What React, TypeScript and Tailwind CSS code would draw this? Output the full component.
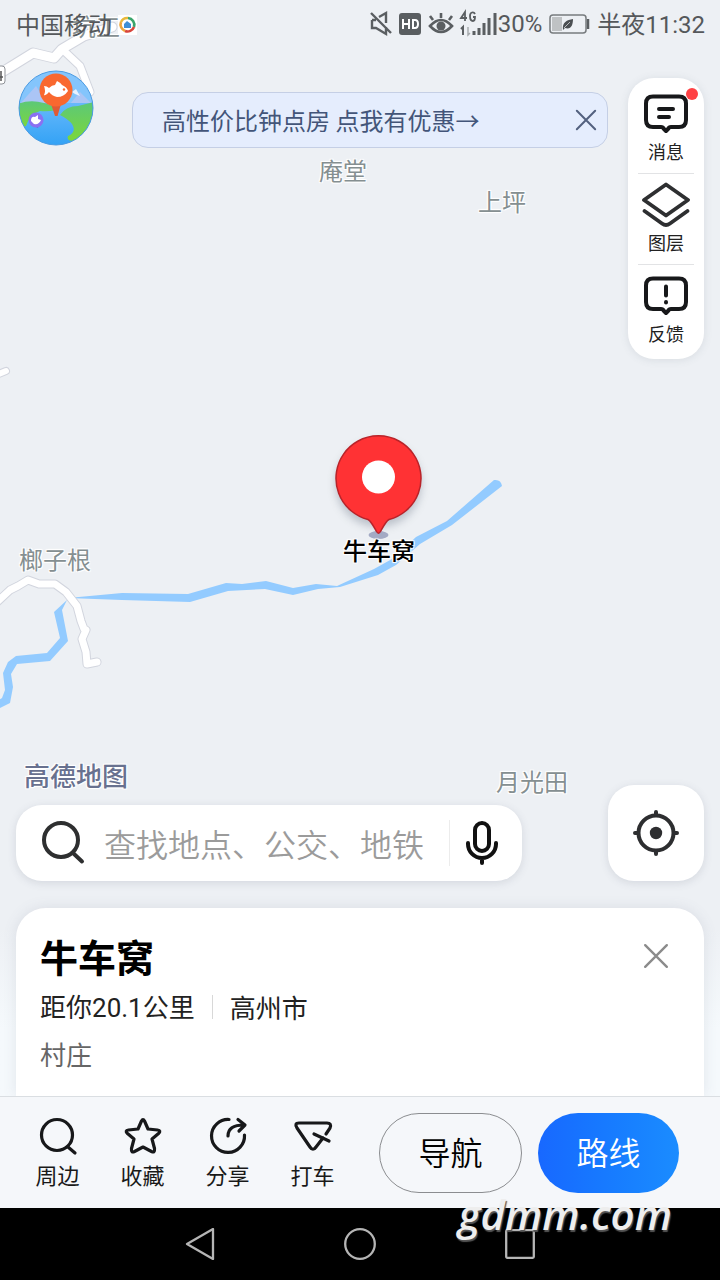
import React from "react";

const outline =
  "[text-shadow:0_0_2px_#fff,1px_1px_1px_#fff,-1px_-1px_1px_#fff,1px_-1px_1px_#fff,-1px_1px_1px_#fff]";

function MapLabel({ text, place }: { text: string; place: string }) {
  return (
    <span className={`absolute whitespace-nowrap text-[24px] leading-8 text-[#858f91] ${outline} ${place}`}>
      {text}
    </span>
  );
}

function MapCanvas() {
  const roads = [
    "M-6 77L12 66L33 53L54 58L62 49L84 36L112 27",
    "M62 49L80 66L90 92",
    "M-4 603L10 590L18 586L28 580L39 584L55 584L66 592L77 606L81 621L84 629L86 630L82 639L86 652L87 664L97 662",
  ];
  return (
    <div className="absolute inset-0 overflow-hidden bg-[#edf0f4]">
      <svg width="720" height="1280" viewBox="0 0 720 1280" aria-hidden="true" fill="none">
        <g fill="#93cbff">
          <path d="M68 598L122 593L188 594L226 583L242 584L266 581L293 588L316 584L337 586L374 569L392 559L416 537L447 521L494 480Q501 479 502 486L452 525L420 544L396 565L378 575L340 587L318 589L293 595L265 589L228 591L190 602L122 600Z" />
          <path d="M67 600L54 612L60 638L47 653L16 656L8 662L3 673L5 690L2 698L-4 702V710L10 703L13 687L11 674L17 664L50 661L68 641L62 610Z" />
        </g>
        <g strokeLinejoin="round" strokeLinecap="round">
          {roads.map((d, i) => (
            <path key={d} d={d} stroke="#d2d5de" strokeWidth={i === 0 ? 11 : 9} />
          ))}
          {roads.map((d, i) => (
            <path key={d} d={d} stroke="#fff" strokeWidth={i === 0 ? 9 : 7} />
          ))}
          <path d="M-4 375L6 371" stroke="#d2d5de" strokeWidth="8" />
          <path d="M-4 375L6 371" stroke="#fff" strokeWidth="6" />
        </g>
        <rect x="-12" y="66" width="17" height="18" rx="3" fill="#fff" stroke="#8f9297" />
        <path d="M-2 77H3M1 71V81" stroke="#555" strokeWidth="1.5" />
        <rect x="118" y="15" width="19" height="20" fill="#fff" />
        <g strokeWidth="2.6">
          <path d="M121 22A7 7 0 0 1 128 18" stroke="#e9b93a" />
          <path d="M128 18A7 7 0 0 1 134 27" stroke="#3aa56b" />
          <path d="M134 27A7 7 0 0 1 125 31" stroke="#d8453b" />
          <path d="M125 31A7 7 0 0 1 121 22" stroke="#eea63c" />
        </g>
        <path d="M124 28V24L127 21L131 24V28Z" fill="#3f8fd6" />
      </svg>
      <MapLabel text="坑工" place="left-[72px] top-[10px]" />
      <MapLabel text="庵堂" place="left-[319px] top-[154px]" />
      <MapLabel text="上坪" place="left-[478px] top-[185px]" />
      <MapLabel text="榔子根" place="left-[19px] top-[543px]" />
      <MapLabel text="月光田" place="left-[496px] top-[765px]" />
      <svg className="absolute left-[326px] top-[428px]" width="106" height="118" viewBox="0 0 106 118" aria-hidden="true">
        <defs>
          <filter id="pinShadow" x="-20%" y="-20%" width="140%" height="140%">
            <feGaussianBlur stdDeviation="4" />
          </filter>
        </defs>
        <circle cx="52.500" cy="56" r="43" fill="#7d8694" opacity=".45" filter="url(#pinShadow)" />
        <ellipse cx="52.500" cy="107" rx="10" ry="4" fill="#a3aac4" />
        <path
          d="M42 91.500A42.500 42.500 0 1 1 63 91.500C60 93 57 99 54.500 103.500Q52.500 107 50.500 103.500C48 99 45 93 42 91.500Z"
          fill="#ff3234"
          stroke="#b92329"
          strokeWidth="1.500"
        />
        <circle cx="52.500" cy="49" r="16.500" fill="#fff" />
      </svg>
      <span className={`absolute left-[343px] top-[534px] whitespace-nowrap text-[24px] font-medium leading-8 text-black ${outline}`}>
        牛车窝
      </span>
    </div>
  );
}

function StatusBar() {
  return (
    <header className="flex h-12 items-center justify-between pl-4 pr-4 text-[24px] leading-8 text-[#55585b]">
      <span>中国移动</span>
      <div className="flex items-center">
        <svg width="129" height="30" viewBox="0 0 129 30" fill="none" stroke="#5a5e61" aria-hidden="true">
          <path d="M2 4L22 24M3 11V19H7L17 25V18M3 11H7M10 8L17 4V14" strokeWidth="2.400" />
          <rect x="30" y="4" width="22" height="22" rx="3" fill="#5a5e61" stroke="none" />
          <path d="M34 10V20M40 10V20M34 15H40M44 11V19H46Q49 19 49 15T46 11Z" stroke="#fff" strokeWidth="2" />
          <path d="M61 17Q72 5 83 17Q72 29 61 17ZM72 9V4M64 11L61 7M80 11L83 7" strokeWidth="2.600" />
          <circle cx="72" cy="17" r="4.500" fill="#5a5e61" stroke="none" />
          <path d="M96 12V3L92 9H98M106 5Q105 3 103 3.500Q101 4 101 7Q101 12 104 12Q106 12 106 8H104" strokeWidth="1.800" />
          <path d="M92 20L94 18V26" strokeWidth="2" />
          <path d="M99 18V26L101 24" strokeWidth="1.400" stroke="#a4a8ab" />
          <path d="M105 22V26M110 19V26M115 14V26M120 9V26M126 4V26" strokeWidth="3" />
        </svg>
        <span className="font-[Roboto]">30%</span>
        <svg className="ml-[7px] mr-1.5" width="42" height="22" viewBox="0 0 42 22" aria-hidden="true">
          <rect x="1" y="2" width="36" height="18" rx="3" fill="none" stroke="#777b7e" strokeWidth="1.500" />
          <rect x="3" y="4" width="10" height="14" fill="#bfc2c4" />
          <path d="M39 6V16" stroke="#5a5e61" strokeWidth="2.500" />
          <path d="M14 17C13 9 18 7 24 6C24 12 22 17 16 15Z" fill="#4b4f52" />
          <path d="M15 15L21 9" stroke="#d5d8da" strokeWidth=".8" />
        </svg>
        <span className="-mr-px whitespace-nowrap">
          半夜<span className="font-[Roboto]">11:32</span>
        </span>
      </div>
    </header>
  );
}

function Avatar() {
  return (
    <button aria-label="我的" className="size-[76px] shrink-0">
      <svg width="76" height="76" viewBox="0 0 76 76" aria-hidden="true">
        <defs>
          <clipPath id="globe">
            <circle cx="38" cy="38" r="37" />
          </clipPath>
          <linearGradient id="sea" x1="0" y1="0" x2="0" y2="1">
            <stop offset="0" stopColor="#67b8fb" />
            <stop offset="1" stopColor="#32a2f5" />
          </linearGradient>
          <linearGradient id="land" x1="0" y1="0" x2="0" y2="1">
            <stop offset="0" stopColor="#5cc878" />
            <stop offset="1" stopColor="#7cd73a" />
          </linearGradient>
        </defs>
        <g clipPath="url(#globe)">
          <rect width="76" height="76" fill="#84c5fc" />
          <path d="M0 36L18 16L28 32L52 34L62 22L76 36Z" fill="#abc5f5" />
          <path d="M54 22L58 19L62 26L57 24Z" fill="#e8f1ff" />
          <rect y="33" width="76" height="43" fill="url(#sea)" />
          <path d="M0 34Q12 29 26 33Q35 35 38 40Q30 42 22 41Q12 44 8 56L0 58Z" fill="url(#land)" />
          <path d="M42 45Q48 36 60 36L76 32V62Q66 72 56 71Q48 71 50 66Q59 62 54 54Q50 49 42 45Z" fill="url(#land)" />
        </g>
        <circle cx="38" cy="38" r="37" fill="none" stroke="#4b9be2" />
        <path d="M33 34H43L39.500 46H37Z" fill="#df5a36" />
        <circle cx="38" cy="20" r="16.500" fill="#f9682f" />
        <path d="M26 16Q29 16 31 18Q34 15 37 15L39 11Q43 13 44 15Q49 17 50 21Q46 27 39 27Q34 26 31 22Q28 26 26 25Q28 21 26 16Z" fill="#fff" />
        <circle cx="46" cy="19.500" r="1.200" fill="#f9682f" />
        <path d="M14 55L20 58L21 54Z" fill="#6f5adb" />
        <circle cx="18" cy="50" r="7.500" fill="#8a70f1" />
        <path d="M13 51Q13 46 17 47L20 45V49L23 50Q21 55 16 54Z" fill="#fff" />
      </svg>
    </button>
  );
}

function Cross({ size, color }: { size: number; color: string }) {
  return (
    <svg width={size} height={size} viewBox="0 0 24 24" fill="none" stroke={color} strokeWidth="2.200" strokeLinecap="round" aria-hidden="true">
      <path d="M2 2L22 22M22 2L2 22" />
    </svg>
  );
}

function Bubble({ children }: { children: React.ReactNode }) {
  return (
    <svg width="48" height="48" viewBox="0 0 48 48" fill="none" stroke="#17181a" strokeWidth="4" strokeLinecap="round" strokeLinejoin="round" aria-hidden="true">
      <path d="M11 6.500H37Q44 6.500 44 13.500V30Q44 37 37 37H29Q27 37 26 39L24 41L22 39Q21 37 19 37H11Q4 37 4 30V13.500Q4 6.500 11 6.500Z" />
      {children}
    </svg>
  );
}

function ToolStack() {
  const item = "relative flex w-14 flex-col items-center text-[18px] leading-6 text-[#222]";
  return (
    <nav className="mt-2 flex w-[76px] shrink-0 flex-col items-center rounded-[26px] bg-white pb-3.5 pt-3 shadow-[0_1px_8px_rgba(80,90,110,0.13)]">
      <button className={`${item} pb-2.5`}>
        <Bubble>
          <path d="M17 19H31M17 27H27" />
        </Bubble>
        <span className="mt-px">消息</span>
        <i className="absolute right-[-4px] top-[-2px] size-3 rounded-full bg-[#ff4144]" />
      </button>
      <button className={`${item} border-t border-[#e2e3e5] pb-2.5 pt-[7px]`}>
        <svg width="48" height="48" viewBox="0 0 48 48" fill="none" stroke="#2e2f31" strokeWidth="3.800" strokeLinecap="round" strokeLinejoin="round" aria-hidden="true">
          <path d="M24 3.500L46 19L24 34.500L2 19Z" />
          <path d="M2.500 30L20 42.500Q24 45.500 28 42.500L45.500 30" />
        </svg>
        <span className="mt-px">图层</span>
      </button>
      <button className={`${item} border-t border-[#e2e3e5] pt-[7px]`}>
        <Bubble>
          <path d="M24 14.500V23.500M24 30V30.500" />
        </Bubble>
        <span className="mt-px">反馈</span>
      </button>
    </nav>
  );
}

function SearchRow() {
  return (
    <div className="flex items-end justify-between gap-[86px] px-4">
      <form className="flex h-[76px] min-w-0 flex-1 items-center rounded-[26px] bg-white pl-6 pr-4 shadow-[0_2px_8px_rgba(80,90,110,0.16)]">
        <svg className="shrink-0" width="46" height="46" viewBox="0 0 46 46" fill="none" stroke="#2e2f30" strokeWidth="4" aria-hidden="true">
          <circle cx="21" cy="20" r="17" />
          <path d="M33 33L42 41.500" strokeLinecap="round" />
        </svg>
        <input
          aria-label="搜索"
          placeholder="查找地点、公交、地铁"
          className="ml-[18px] h-12 min-w-0 flex-1 bg-transparent text-[32px] font-[350] leading-10 outline-none placeholder:text-[#9b9b9b]"
        />
        <button type="button" aria-label="语音搜索" className="flex h-[46px] shrink-0 items-center border-l border-[#ececec] pl-2">
          <svg width="48" height="48" viewBox="0 0 48 48" fill="none" stroke="#111" strokeWidth="4" strokeLinecap="round" aria-hidden="true">
            <rect x="17" y="4" width="14" height="28" rx="7" />
            <path d="M10 24V25A14 14 0 0 0 38 25V24M24 39V44" />
          </svg>
        </button>
      </form>
      <button aria-label="定位" className="flex size-24 shrink-0 items-center justify-center rounded-[26px] bg-white shadow-[0_2px_8px_rgba(80,90,110,0.16)]">
        <svg width="48" height="48" viewBox="0 0 48 48" fill="none" stroke="#2d2e30" strokeWidth="4" strokeLinecap="round" aria-hidden="true">
          <circle cx="24" cy="24" r="17.500" />
          <path d="M24 3V6M24 42V45M3 24H6M42 24H45" />
          <circle cx="24" cy="24" r="6.200" fill="#2d2e30" stroke="none" />
        </svg>
      </button>
    </div>
  );
}

function PlaceCard() {
  return (
    <section className="mx-4 mt-[27px] rounded-t-[30px] bg-white px-6 pb-6 pt-6 shadow-[0_0_14px_rgba(90,100,125,0.13)]">
      <div className="flex items-center justify-between">
        <h1 className="text-[38px] font-bold leading-[42px] text-black">牛车窝</h1>
        <button aria-label="关闭" className="flex size-12 items-center justify-center">
          <Cross size={26} color="#8b8b8b" />
        </button>
      </div>
      <p className="mt-2 flex items-center text-[26px] leading-9 text-[#222]">
        <span>
          距你<span className="font-[Roboto]">20.1</span>公里
        </span>
        <span className="mx-[17px] h-6 w-px bg-[#d8d8d8]" />
        <span>高州市</span>
      </p>
      <p className="mt-2.5 text-[26px] leading-9 text-[#666]">村庄</p>
    </section>
  );
}

const actions = [
  {
    label: "周边",
    icon: (
      <>
        <circle cx="19" cy="19" r="15.500" />
        <path d="M30 31L37 37" />
      </>
    ),
  },
  {
    label: "收藏",
    icon: (
      <path d="M18.500 5Q20 2 21.500 5L25 13L34.500 14Q38.500 14.500 35.500 17.500L29 23L31.500 32.500Q32 37 28.500 35.500L20 31L11.500 35.500Q8 37 8.500 32.500L11 23L4.500 17.500Q1.500 14.500 5.500 14L15 13Z" />
    ),
  },
  {
    label: "分享",
    icon: (
      <>
        <path d="M21 3.500A16.500 16.500 0 1 0 36.500 19" />
        <path d="M20 20C20 13 25 9 36 9M30 3.500L37 9L31 15" />
      </>
    ),
  },
  {
    label: "打车",
    icon: (
      <>
        <path d="M33 18L37 12Q39 7 34 7H6Q1 7 4 12L17 31Q20 35.500 23 31L30 22" />
        <path d="M21 18L36 25" />
      </>
    ),
  },
];

function BottomBar() {
  return (
    <footer className="flex h-28 items-center border-t border-[#dadee2] bg-[#f5f7fa] pl-[15px] pr-[41px]">
      {actions.map((a) => (
        <button key={a.label} className="flex w-[85px] shrink-0 flex-col items-center text-[22px] leading-8 text-[#191919]">
          <svg width="40" height="40" viewBox="0 0 40 40" fill="none" stroke="#17181a" strokeWidth="3.200" strokeLinecap="round" strokeLinejoin="round" aria-hidden="true">
            {a.icon}
          </svg>
          <span className="mt-0.5">{a.label}</span>
        </button>
      ))}
      <div className="ml-6 flex min-w-0 flex-1 gap-4 text-[32px] font-[350] leading-10">
        <button className="h-20 flex-1 rounded-full border border-[#8b8d90] pb-1 text-black">导航</button>
        <button className="h-20 flex-1 rounded-full bg-gradient-to-r from-[#1868ff] to-[#1b8cff] pb-1 text-white">路线</button>
      </div>
    </footer>
  );
}

function SystemNav() {
  const icon = "size-8";
  return (
    <nav className="relative flex h-[72px] items-center justify-center gap-32 bg-black">
      <button aria-label="返回">
        <svg className={icon} viewBox="0 0 32 32" fill="none" stroke="#b5b5b5" strokeWidth="2.300" strokeLinejoin="round" aria-hidden="true">
          <path d="M3 16L29 1V31Z" />
        </svg>
      </button>
      <button aria-label="主页">
        <svg className={icon} viewBox="0 0 32 32" fill="none" stroke="#b5b5b5" strokeWidth="2.300" aria-hidden="true">
          <circle cx="16" cy="16" r="14.800" />
        </svg>
      </button>
      <button aria-label="最近任务">
        <svg className={icon} viewBox="0 0 32 32" fill="none" stroke="#b5b5b5" strokeWidth="2.300" aria-hidden="true">
          <rect x="2.200" y="2.200" width="27.600" height="27.600" rx="1" />
        </svg>
      </button>
      <span className="absolute right-12 top-[-18px] font-['Open_Sans'] text-[42px] font-semibold italic leading-[48px] text-[#eee] [text-shadow:1px_2px_1px_#555]">
        gdmm.com
      </span>
    </nav>
  );
}

export default function App() {
  return (
    <main className="relative flex min-h-screen flex-col font-['Noto_Sans_CJK_SC',sans-serif]">
      <MapCanvas />
      <div className="relative flex flex-1 flex-col">
        <StatusBar />
        <div className="flex items-start pl-[18px] pr-4 pt-[22px]">
          <Avatar />
          <div className="ml-[38px] mr-5 mt-[22px] flex h-14 min-w-0 flex-1 items-center justify-between rounded-[16px] border border-[#c5cfe5] bg-[#e5edfd] pl-[29px] pr-2.5 text-[24px] text-[#435579]">
            <a href="#offer" className="whitespace-nowrap">
              高性价比钟点房 点我有优惠→
            </a>
            <button aria-label="关闭广告">
              <Cross size={22} color="#53617f" />
            </button>
          </div>
          <ToolStack />
        </div>
        <div className="flex-1" />
        <div className="bg-gradient-to-b from-transparent from-50% to-[#f5f9fc] to-80%">
          <div className={`-mb-1.5 ml-6 text-[26px] font-medium leading-8 text-[#68718f] ${outline}`}>高德地图</div>
          <SearchRow />
          <PlaceCard />
        </div>
        <BottomBar />
        <SystemNav />
      </div>
    </main>
  );
}
